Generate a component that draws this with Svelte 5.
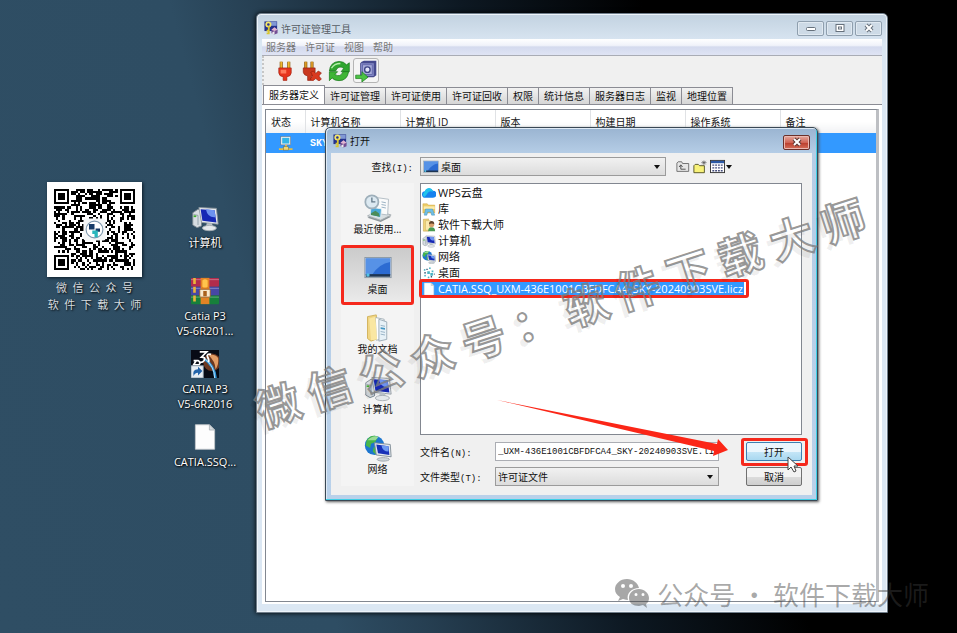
<script>
  const tabs = ['服务器定义', '许可证管理', '许可证使用', '许可证回收', '权限', '统计信息', '服务器日志', '监视', '地理位置'];
  const menus = ['服务器', '许可证', '视图', '帮助'];
  const columns = ['状态', '计算机名称', '计算机 ID', '版本', '构建日期', '操作系统', '备注'];

  const shortcuts = [
    { icon: 'computer', lines: ['计算机'] },
    { icon: 'archive', lines: ['Catia P3', 'V5-6R201...'] },
    { icon: 'catia', lines: ['CATIA P3', 'V5-6R2016'] },
    { icon: 'file', lines: ['CATIA.SSQ...'] }
  ];

  const places = [
    { icon: 'recent', label: '最近使用...' },
    { icon: 'desktop', label: '桌面' },
    { icon: 'documents', label: '我的文档' },
    { icon: 'computer', label: '计算机' },
    { icon: 'network', label: '网络' }
  ];

  const files = [
    { icon: 'cloud', name: 'WPS云盘' },
    { icon: 'library', name: '库' },
    { icon: 'user', name: '软件下载大师' },
    { icon: 'computer', name: '计算机' },
    { icon: 'network', name: '网络' },
    { icon: 'dots', name: '桌面' },
    { icon: 'file', name: 'CATIA.SSQ_UXM-436E1001CBFDFCA4_SKY-20240903SVE.licz' }
  ];

  let tab = tabs[0];
  let place = '桌面';
  let selected = files[6].name;
  let fileName = '_UXM-436E1001CBFDFCA4_SKY-20240903SVE.licz';

  // QR code, 37 x 37 modules
  const N = 37;

  function finder(x, y) {
    const d = Math.max(Math.abs(x - 3), Math.abs(y - 3));
    if (d > 4) return null;
    return d !== 4 && d !== 2;
  }

  function buildCode() {
    let path = '';
    let seed = 20240903;
    for (let y = 0; y < N; y++) {
      for (let x = 0; x < N; x++) {
        seed = (seed * 1103515245 + 12345) % 2147483648;
        let on = (seed >> 12) % 100 < 50;
        for (const f of [finder(x, y), finder(x - N + 7, y), finder(x, y - N + 7)]) {
          if (f !== null) on = f;
        }
        const a = Math.max(Math.abs(x - 30), Math.abs(y - 30));
        if (a <= 2) on = a !== 1;
        if (on) path += `M${x} ${y}h1v1h-1z`;
      }
    }
    return path;
  }

  const code = buildCode();
</script>

{#snippet icon(name, size)}
  <svg width={size} height={size} viewBox="0 0 32 32" aria-hidden="true">
    {#if name === 'computer'}
      <path d="M2 10l6-4 4 1v18l-5 2-5-3z" fill="#d7dde2" stroke="#79858e" />
      <path d="M3 12l5 1v11" fill="none" stroke="#8d9aa3" />
      <path d="M3 14h3" stroke="#3fae2a" stroke-width="2" />
      <path d="M9 4l20 1 2 18-19-2z" fill="#e6eaee" stroke="#8b959d" />
      <path d="M11 6l16 1 2 14-16-2z" fill="#1628b4" />
      <path d="M18 6l9 1 1 8q-9 1-11-9z" fill="#6d92f0" />
      <path d="M18 22h6l1 4h-8z" fill="#b9c1c7" />
      <ellipse cx="21" cy="27.500" rx="8" ry="3" fill="#e4e8eb" stroke="#a3abb1" />
    {:else if name === 'network'}
      <circle cx="12" cy="13" r="11" fill="#1c76cf" />
      <path d="M3 7q5-7 13-4l-3 6-5 2-1 5-5-3zM11 15l6 1 2 5-5 3-4-4z" fill="#47b649" />
      <path d="M4 7q6-6 13-4l-4 4z" fill="#bfeab8" opacity=".7" />
      <path d="M12 10l18 2 1 14-17-2z" fill="#e3e9ee" stroke="#7d8992" />
      <path d="M14 12l14 2 1 10-13-2z" fill="#1730b8" />
      <path d="M20 13l8 1v6q-7 0-8-7z" fill="#6f9bf2" />
      <ellipse cx="22" cy="29" rx="7" ry="2" fill="#cfd6db" stroke="#9ba4aa" />
    {:else if name === 'desktop'}
      <rect x="1" y="4" width="30" height="23" fill="#dbe3ea" stroke="#8694a1" />
      <rect x="2" y="5" width="28" height="19" fill="#2c6bd2" />
      <path d="M2 5h28v4Q17 11 9 24H2z" fill="#6aa2ee" opacity=".7" />
      <rect x="2" y="23" width="28" height="3" fill="#1e3552" />
      <circle cx="4.500" cy="24" r="2" fill="#54c2e7" />
    {:else if name === 'recent'}
      <path d="M4 27l11-6 16 5-12 6z" fill="#8d959a" />
      <path d="M4 25l11-6 16 5-12 6z" fill="#d9dfe2" stroke="#a3abb0" />
      <path d="M14 4l14 2-1 18-14-2z" fill="#fafbfb" stroke="#adb8c0" />
      <path d="M20 9l5 1M20 12l5 1M20 15l5 1" stroke="#8fa9bd" />
      <path d="M8 15l12 2-1 10-12-3z" fill="#49a8d8" stroke="#e6eef2" />
      <path d="M8 22l5-3 4 3 1 4-10-2z" fill="#4b8c5a" />
      <circle cx="9" cy="9" r="7.500" fill="#dce9f1" stroke="#9eafba" stroke-width="2" />
      <path d="M9 4v5h4" fill="none" stroke="#637989" stroke-width="1.500" />
    {:else if name === 'documents'}
      <path d="M4 3l10-2 2 27-8 3-4-3z" fill="#f0d583" stroke="#cfae53" />
      <path d="M13 4l10 2v22l-9 2z" fill="#fff" stroke="#9eabb4" />
      <path d="M17 6l9 3v20l-9 2z" fill="#e7f1f7" stroke="#97a8b3" />
      <path d="M19 13l5 1M19 20l5 1M19 23l5 1" stroke="#90adc1" />
      <path d="M19 15l5 1v2l-5-1z" fill="#4396c4" />
      <path d="M6 5l7-2 2 26-7 1z" fill="#fae7a2" />
    {:else if name === 'file'}
      <path d="M5 2h16l6 6v22H5z" fill="#fdfdfd" stroke="#c3c8cc" />
      <path d="M21 2v6h6z" fill="#d8dde0" stroke="#aeb5ba" />
    {:else if name === 'cloud'}
      <path d="M8 27a7 7 0 0 1-1-15 10 10 0 0 1 18-1 8 8 0 0 1 0 16z" fill="#1782ee" />
      <path d="M6 13a10 10 0 0 1 15-7q4 3 4 7-8-3-12 3-3 5-7 9-8-4 0-12z" fill="#20c3ec" />
    {:else if name === 'library'}
      <path d="M2 4h10l2 3h15v18H2z" fill="#edcd67" stroke="#c79f3c" />
      <path d="M4 10h25v6H4z" fill="#fcecac" />
      <path d="M5 30l3-14h16l5 14h-7l-2-7h-7l-2 7z" fill="#6fbfe6" stroke="#3f8ab3" />
    {:else if name === 'user'}
      <path d="M3 3l12-1v28H3z" fill="#efd37a" stroke="#b9963e" />
      <path d="M8 6h11v22H8z" fill="#faeab0" stroke="#c9aa57" />
      <path d="M14 30q0-9 8-9t8 9z" fill="#4a9b52" />
      <circle cx="22" cy="15" r="6" fill="#d8a06b" />
      <path d="M16 14q0-7 6-7t6 7q-6-3-12 0z" fill="#60432b" />
    {:else if name === 'dots'}
      <g fill="#4bb5c5">
        <path d="M12 12h6v6h-6zM19 16h6v6h-6zM22 10h4v4h-4z" />
        <circle cx="6" cy="9" r="2" /><circle cx="18" cy="5" r="2" /><circle cx="7" cy="22" r="2" /><circle cx="15" cy="26" r="2" />
      </g>
      <path d="M10 6h3v3h-3zM5 14h4v3H5zM20 23h3v3h-3zM27 17h2v3h-2z" fill="#365171" />
    {:else if name === 'archive'}
      <rect x="0" y="1" width="32" height="10" rx="1" fill="#b22c4c" />
      <rect x="0" y="11" width="32" height="10" rx="1" fill="#4747a5" />
      <rect x="0" y="21" width="32" height="10" rx="1" fill="#17803b" />
      <path d="M0 3h32M0 13h32M0 23h32" stroke="#fff" opacity=".35" />
      <path d="M4 1v30" stroke="#e9b43b" stroke-width="3" stroke-dasharray="7 3" />
      <rect x="11" y="1" width="10" height="30" fill="#e28325" />
      <rect x="10" y="14" width="12" height="9" rx="1" fill="#f7e8cc" stroke="#935922" />
      <rect x="14" y="16" width="4" height="6" fill="#a9601c" />
      <path d="M13 4q3-3 6 0v7q-3 2-6 0z" fill="#ffc44c" />
    {:else if name === 'catia'}
      <rect width="32" height="32" fill="#070b15" />
      <circle cx="24" cy="14" r="10" fill="#6d3820" />
      <path d="M20 6q7-2 11 3 1 8-3 13 0-9-8-16z" fill="#e19c65" />
      <path d="M15 10q12 8 13 22" fill="none" stroke="#2c93d8" stroke-width="3" />
      <path d="M16 10q11 9 11 22" fill="none" stroke="#c6e6f8" />
      <path d="M10 2h8l-6 6q5 0 3 4-2 3-6 2M3 12h5q4 2 1 5H3l3-5M23 5q-6-1-4 3t1 6" fill="none" stroke="#fff" stroke-width="2" />
      <rect x="0" y="18" width="14" height="14" fill="#e8eef4" stroke="#8797a6" />
      <path d="M3 30q-2-8 5-8v-3l5 5-5 5v-3q-4 0-5 4z" fill="#2364aa" />
    {:else if name === 'app'}
      <path d="M1 1h29v22H1z" fill="#24318c" />
      <path d="M15 2h14v9H15z" fill="#8098d4" />
      <circle cx="10" cy="8" r="5" fill="none" stroke="#f4e66a" stroke-width="4" />
      <path d="M11 12v18M11 22H6M11 28H6" stroke="#d9c630" stroke-width="4" />
      <path d="M17 20l7-6 7 6v8l-7 3-7-3z" fill="#744f93" />
      <path d="M17 20l7 3 7-3-7-6z" fill="#e1b5d1" />
      <path d="M24 23v8l-7-3z" fill="#eee" />
    {:else if name === 'plug'}
      <path d="M10 1v11M22 1v11" stroke="#8a5a10" stroke-width="5" />
      <path d="M10 1v11M22 1v11" stroke="#f0b62c" stroke-width="3" />
      <path d="M6 11h20v8q-1 6-7 6v6h-6v-6q-6 0-7-6z" fill="#e7341d" stroke="#9d1e0e" />
      <path d="M9 14h9v6h-9z" fill="#ff7a5c" />
    {:else if name === 'unplug'}
      <path d="M6 1v11M16 1v11" stroke="#8a5a10" stroke-width="5" />
      <path d="M6 1v11M16 1v11" stroke="#d99a24" stroke-width="3" />
      <path d="M2 11h19v8q-1 5-6 5v7h-6v-7q-6-1-7-6z" fill="#c9381f" stroke="#8f1d0d" />
      <path d="M14 18l4-2 4 4 4-4 5 3-4 5 4 5-4 3-5-4-5 4-4-3 4-5z" fill="#d93a20" stroke="#8f1d0d" />
    {:else if name === 'refresh'}
      <path d="M2 16Q3 3 16 2q7 0 11 5l4-3v13H19l4-5q-8-5-12 4z" fill="#2fa52f" stroke="#137316" />
      <path d="M30 17q-2 13-14 13-7 0-10-4l-4 4V17h12l-4 4q8 5 12-4z" fill="#3fb536" stroke="#137316" />
      <path d="M5 12Q9 5 18 5" fill="none" stroke="#b4edaa" stroke-width="2" />
    {:else if name === 'vault'}
      <path d="M9 3l4-2h18v21l-4 3H9z" fill="#454990" />
      <rect x="8" y="4" width="20" height="20" rx="1" fill="#8186c6" stroke="#3c407e" />
      <rect x="11" y="7" width="14" height="14" fill="#a6abd9" stroke="#585da1" />
      <circle cx="18" cy="14" r="4" fill="#e3e5fa" stroke="#3d4384" stroke-width="2" />
      <path d="M1 22h9v-5l9 8-9 7v-5H1z" fill="#4cc344" stroke="#187b1a" />
    {:else if name === 'server'}
      <rect x="6" y="1" width="21" height="18" fill="#e9edf0" stroke="#56636e" />
      <rect x="9" y="4" width="15" height="12" fill="#33b5e8" />
      <path d="M17 19v8M2 28h29" stroke="#e4be46" stroke-width="4" />
      <rect x="12" y="23" width="10" height="7" fill="#f0d779" stroke="#806a28" />
    {:else if name === 'up'}
      <path d="M2 26V7l3-3h8l2 4h14v18z" fill="#e6e6e6" stroke="#666" stroke-width="2" />
      <path d="M11 12v9h11M7 16l4-5 4 5" fill="none" stroke="#444" stroke-width="2" />
    {:else if name === 'newfolder'}
      <path d="M2 29V13l3-3h7l3 3h11v16z" fill="#f8f27a" stroke="#4c4a1c" stroke-width="2" />
      <path d="M25 1v11M19 6h12M21 2l8 8M29 2l-8 8" stroke="#555" stroke-width="1.500" />
    {:else if name === 'views'}
      <rect x="1" y="3" width="30" height="26" fill="#fff" stroke="#333" stroke-width="2" />
      <rect x="2" y="4" width="28" height="5" fill="#2c59a6" />
      <path d="M5 13h22M5 19h22M5 25h22" stroke="#444c7c" stroke-width="3" stroke-dasharray="4 2" />
    {/if}
  </svg>
{/snippet}

<main class="desktop">
  <figure class="qr">
    <svg viewBox="-3 -3 43 43" role="img" aria-label="微信公众号">
      <rect x="-3" y="-3" width="43" height="43" fill="#fff" />
      <path d={code} fill="#000" shape-rendering="crispEdges" />
      <rect x="13.500" y="13.500" width="10" height="10" rx="1" fill="#f4f6f7" />
      <circle cx="18.500" cy="18.500" r="3.800" fill="#fff" stroke="#7e98ae" stroke-width=".5" />
      <path d="M16 16h2.500v2.500H16zM19 18h2v1.500h-2z" fill="#173b68" />
      <path d="M17.500 19h2.500v3h-1.500v-1.500h-1z" fill="#29b7bd" />
    </svg>
    <figcaption>微&ensp;信&ensp;公&ensp;众&ensp;号<br />软&ensp;件&ensp;下&ensp;载&ensp;大&ensp;师</figcaption>
  </figure>

  <nav class="shortcuts">
    {#each shortcuts as item}
      <button class="shortcut">
        {@render icon(item.icon, 28)}
        {#each item.lines as line}
          <span>{line}</span>
        {/each}
      </button>
    {/each}
  </nav>

  <section class="window">
    <header class="titlebar">
      {@render icon('app', 14)}
      <h1>许可证管理工具</h1>
      <div class="controls">
        <button aria-label="最小化"><svg width="12" height="10" viewBox="0 0 12 10"><rect x="1.500" y="4.500" width="9" height="3" rx="1" fill="#fff" stroke="#66717c" /></svg></button>
        <button aria-label="最大化"><svg width="12" height="10" viewBox="0 0 12 10"><rect x="2" y="1.500" width="8" height="7" fill="#fff" stroke="#66717c" /><rect x="4.500" y="4" width="3" height="2" fill="#fff" stroke="#66717c" /></svg></button>
        <button aria-label="关闭"><svg width="12" height="10" viewBox="0 0 12 10"><path d="M3 2l6 6M9 2l-6 6" stroke="#66717c" stroke-width="4" /><path d="M3 2l6 6M9 2l-6 6" stroke="#fff" stroke-width="2" /></svg></button>
      </div>
    </header>

    <div class="menubar">
      {#each menus as menu}
        <button>{menu}</button>
      {/each}
    </div>

    <div class="toolbar">
      <button aria-label="连接">{@render icon('plug', 20)}</button>
      <button aria-label="断开">{@render icon('unplug', 20)}</button>
      <button aria-label="刷新">{@render icon('refresh', 22)}</button>
      <button aria-label="导入许可证" class="framed">{@render icon('vault', 22)}</button>
    </div>

    <div class="tabs" role="tablist">
      {#each tabs as name}
        <button role="tab" aria-selected={tab === name} class:active={tab === name} on:click={() => (tab = name)}>{name}</button>
      {/each}
    </div>

    <div class="panel">
      <div class="sheet">
        <table>
          <thead>
            <tr>
              {#each columns as column}
                <th>{column}</th>
              {/each}
            </tr>
          </thead>
          <tbody>
            <tr>
              <td class="status">{@render icon('server', 15)}</td>
              <td>SKY</td>
              <td></td>
              <td></td>
              <td></td>
              <td></td>
              <td></td>
            </tr>
          </tbody>
        </table>
      </div>
    </div>
  </section>

  <section class="dialog" role="dialog" aria-labelledby="dialog-title">
    <header class="titlebar">
      {@render icon('app', 14)}
      <h2 id="dialog-title">打开</h2>
      <button class="close" aria-label="关闭"><svg width="12" height="10" viewBox="0 0 12 10"><path d="M3 2l6 6M9 2l-6 6" stroke="#5a3531" stroke-width="4" /><path d="M3 2l6 6M9 2l-6 6" stroke="#fff" stroke-width="2" /></svg></button>
    </header>

    <div class="body">
      <div class="lookup">
        <label for="look-in">查找<span class="key">(I):</span></label>
        <div class="combo look">
          {@render icon('desktop', 16)}
          <select id="look-in"><option>桌面</option></select>
        </div>
        <button aria-label="向上一级">{@render icon('up', 14)}</button>
        <button aria-label="新建文件夹">{@render icon('newfolder', 14)}</button>
        <button aria-label="查看" class="views">{@render icon('views', 15)}</button>
      </div>

      <div class="content">
        <nav class="places">
          {#each places as item}
            <button class:current={place === item.label} on:click={() => (place = item.label)}>
              {@render icon(item.icon, 28)}
              <span>{item.label}</span>
            </button>
          {/each}
        </nav>

        <div class="browse">
          <ul class="files">
            {#each files as file}
              <li>
                <button class:selected={selected === file.name} on:click={() => (selected = file.name)}>
                  {@render icon(file.icon, 14)}
                  <span>{file.name}</span>
                </button>
              </li>
            {/each}
          </ul>

          <form class="fields" on:submit|preventDefault>
            <label for="file-name">文件名<span class="key">(N):</span></label>
            <input id="file-name" type="text" bind:value={fileName} />
            <button class="push primary">打开</button>
            <label for="file-type">文件类型<span class="key">(T):</span></label>
            <div class="combo">
              <select id="file-type"><option>许可证文件</option></select>
            </div>
            <button class="push" type="button">取消</button>
          </form>
        </div>
      </div>
    </div>

    <svg class="arrow" width="234" height="66" viewBox="0 0 234 66" aria-hidden="true">
      <path d="M1 3L221 47l1-5 10 11-15 6 1-5Z" fill="#fb2617" />
    </svg>
    <svg class="cursor" width="13" height="18" viewBox="0 0 13 18" aria-hidden="true">
      <path d="M1 1v13l3-3 3 5 2-1-2-5h4z" fill="#fff" stroke="#444" />
    </svg>
  </section>

  <div class="stamp">微 信 公 众 号 ： 软 件 下 载 大 师</div>

  <div class="credit">
    <svg width="36" height="32" viewBox="0 0 36 32" aria-hidden="true">
      <path fill-rule="evenodd" d="M13 1C6 1 1 6 1 11c0 4 2 6 5 8l-2 4 5-2q3 1 5 1c-2-7 4-12 11-12C24 5 19 1 13 1zM9 6a2 2 0 1 1 0 4 2 2 0 0 1 0-4zm8 0a2 2 0 1 1 0 4 2 2 0 0 1 0-4z" />
      <path fill-rule="evenodd" d="M25 11c-6 0-10 4-10 9s4 8 10 8l4-1 4 3-1-4c2-1 3-4 3-6 0-5-5-9-10-9zM22 15a1.500 1.500 0 1 1 0 3 1.500 1.500 0 0 1 0-3zm7 0a1.500 1.500 0 1 1 0 3 1.500 1.500 0 0 1 0-3z" />
    </svg>
    <span>公众号 · 软件下载大师</span>
  </div>
</main>

<style>
  :global(body) {
    margin: 0;
    background: #000;
  }
  .desktop {
    position: relative;
    display: flex;
    align-items: flex-start;
    box-sizing: border-box;
    height: 100vh;
    padding: 182px 0 0 47px;
    overflow: hidden;
    background: linear-gradient(75deg, #2f4e64 0, #2e4d63 30%, #263f52 38%, #0d1822 56%, #000 72%);
    font-family: 'Open Sans', 'Noto Sans CJK SC', sans-serif;
    font-size: 10px;
    color: #111;
  }
  svg { display: block; flex: none; }
  button, input, select { font: inherit; color: inherit; }
  button { padding: 0; border: 0; background: none; }

  /* desktop */
  .qr { width: 95px; margin: 0; text-align: center; }
  .qr svg { width: 95px; height: 95px; box-shadow: 1px 1px 3px #0b1a26; }
  .qr figcaption {
    margin-top: 2px;
    font-family: 'Noto Sans CJK SC', sans-serif;
    font-size: 11px;
    line-height: 17px;
    color: #d4dade;
    white-space: nowrap;
    text-shadow: 1px 1px 2px #000;
  }
  .shortcuts { display: flex; flex-direction: column; width: 80px; margin: 22px 0 0 23px; }
  .shortcut {
    display: flex;
    flex-direction: column;
    align-items: center;
    height: 73px;
    font-size: 11px;
    line-height: 15px;
    color: #fff;
    white-space: nowrap;
    text-shadow: 1px 1px 2px #000, 0 0 2px #000;
  }
  .shortcut svg { margin-bottom: 3px; }

  /* license manager */
  .window {
    position: absolute;
    inset: 13px 69px 20px 256px;
    display: flex;
    flex-direction: column;
    box-sizing: border-box;
    padding: 0 5px 8px;
    border: 1px solid #6f7d8a;
    border-radius: 5px 5px 0 0;
    background: linear-gradient(#c2d2e0, #dbe7f3 30px);
    box-shadow: inset 0 0 0 1px #eef4fa, 0 0 5px #000;
  }
  .titlebar { display: flex; align-items: center; gap: 3px; height: 25px; }
  h1, h2 { margin: 0; font-size: 10px; font-weight: 400; }
  h1 { color: #555c64; }
  .window > .titlebar { padding: 3px 0 0 2px; height: 22px; }
  .controls { display: flex; gap: 2px; margin: 0 0 0 auto; }
  .controls button {
    display: flex;
    align-items: center;
    justify-content: center;
    width: 27px;
    height: 15px;
    border: 1px solid #8f9fae;
    border-radius: 2px;
    background: #cddae6;
    box-shadow: inset 0 0 0 1px #e0e9f1;
  }
  .menubar {
    display: flex;
    gap: 9px;
    height: 16px;
    padding-left: 4px;
    border-bottom: 1px solid #a9acb5;
    background: linear-gradient(#fff, #f0f2fa 40%, #d4daee 50%, #dfe4f4);
    line-height: 14px;
    color: #777;
  }
  .toolbar {
    display: flex;
    align-items: center;
    gap: 1px;
    height: 29px;
    padding-left: 8px;
    border-left: 2px dotted #c6c6c6;
    background: #f0f0f0;
  }
  .toolbar button {
    display: flex;
    align-items: center;
    justify-content: center;
    width: 26px;
    height: 25px;
    box-sizing: border-box;
    border: 1px solid transparent;
    border-radius: 3px;
  }
  .toolbar .framed { border-color: #b5b5b5; background: #f5f5f5; }
  .tabs { display: flex; align-items: flex-end; height: 19px; padding-left: 1px; background: #f0f0f0; }
  .tabs button {
    height: 17px;
    padding: 0 5px;
    border: 1px solid #8b8c94;
    border-width: 1px 1px 0 0;
    background: linear-gradient(#f2f2f2, #d6d6d6);
    line-height: 16px;
  }
  .tabs .active { height: 19px; border-left-width: 1px; background: #fff; }
  .panel {
    flex: 1;
    display: flex;
    padding: 4px 3px 2px;
    border-top: 1px solid #8b8c94;
    background: #fff;
  }
  .sheet {
    flex: 1;
    border: 1px solid #828790;
    border-right: 3px solid #bdbfc3;
    background: #fff;
  }
  table { width: 100%; border-collapse: collapse; table-layout: fixed; }
  th {
    height: 23px;
    padding: 0 0 0 5px;
    box-sizing: border-box;
    border-right: 1px solid #e0e2e5;
    background: linear-gradient(#fff 50%, #f1f2f4);
    font-weight: 400;
    text-align: left;
  }
  th:not(:first-child) { width: 95px; }
  th:first-child { width: 39px; }
  th:last-child { width: auto; border-right: 0; }
  td {
    height: 20px;
    padding: 0 0 0 5px;
    background: #3399ff;
    color: #fff;
    font-family: 'Liberation Mono', monospace;
    font-weight: 700;
  }
  .status svg { margin-left: 7px; }

  /* open dialog */
  .dialog {
    position: absolute;
    top: 127px;
    left: 325px;
    width: 493px;
    box-sizing: border-box;
    padding: 0 5px 5px;
    border: 1px solid #3a4854;
    border-radius: 5px 5px 0 0;
    background: linear-gradient(#9ab4d1, #b5cde6 25px, #b9d1ea);
    box-shadow: inset -1px -1px 0 #3fcfe6, inset 1px 1px 0 #dfeaf5, 1px 1px 3px #555;
  }
  .dialog .titlebar { height: 25px; padding-left: 2px; }
  .close {
    display: flex;
    align-items: center;
    justify-content: center;
    width: 27px;
    height: 15px;
    margin: 3px 2px 0 auto;
    border: 1px solid #6b302a;
    border-radius: 2px;
    background: linear-gradient(#e6a99f, #cf6455 50%, #b93b2a 51%, #d4705c);
    box-shadow: inset 0 0 0 1px #eab9b1;
  }
  .body { padding: 4px 10px 9px; background: #f0f0f0; }
  .lookup { display: flex; align-items: center; margin-bottom: 7px; }
  .lookup label { width: 72px; margin-right: 7px; text-align: right; }
  .lookup button { margin-left: 3px; }
  .lookup .look + button { margin-left: 10px; }
  .key { font-family: 'Liberation Mono', monospace; font-size: 9px; }
  .views { display: flex; align-items: center; gap: 1px; }
  .views::after, .combo::after {
    content: '';
    border: 3px solid transparent;
    border-top: 4px solid #111;
    border-bottom: 0;
  }
  .combo {
    display: flex;
    align-items: center;
    box-sizing: border-box;
    height: 19px;
    padding: 0 5px 0 2px;
    border: 1px solid #9b9b9b;
    background: linear-gradient(#f1f1f1, #dcdcdc);
  }
  .combo select {
    flex: 1;
    appearance: none;
    padding: 0;
    border: 0;
    background: none;
  }
  .look { width: 246px; gap: 2px; }
  .content { display: flex; gap: 6px; }
  .places { width: 73px; padding-top: 2px; background: #f4f4f4; }
  .places button {
    position: relative;
    display: flex;
    flex-direction: column;
    align-items: center;
    width: 100%;
    height: 60px;
    padding-top: 9px;
    box-sizing: border-box;
    line-height: 14px;
    white-space: nowrap;
  }
  .places .current { background: linear-gradient(#c9c9c9, #ececec); }
  .places .current::after, .files .selected::after, .primary::after {
    content: '';
    position: absolute;
    inset: 0;
    border: 3px solid #f5281c;
    border-radius: 3px;
  }
  .browse { flex: 1; min-width: 0; }
  .files {
    box-sizing: border-box;
    height: 252px;
    margin: 0;
    padding: 1px;
    border: 1px solid #828790;
    background: #fff;
    list-style: none;
    font-size: 11px;
  }
  .files button {
    position: relative;
    display: flex;
    align-items: center;
    gap: 1px;
    height: 16px;
    line-height: 16px;
    white-space: nowrap;
  }
  .files span { padding: 0 1px; }
  .files .selected { background: #3399ff; color: #fff; }
  .files .selected::after { inset: -2px -5px -1px -3px; }
  .fields {
    display: grid;
    grid-template-columns: 75px 1fr 56px;
    align-items: center;
    row-gap: 6px;
    padding: 7px 0 0;
  }
  .fields input {
    box-sizing: border-box;
    min-width: 0;
    height: 19px;
    padding: 0 2px;
    border: 1px solid #abadb3;
    background: #fff;
    font-family: 'Liberation Mono', monospace;
    font-size: 9px;
  }
  .fields input, .fields .combo { margin-right: 27px; }
  .push {
    position: relative;
    height: 19px;
    border: 1px solid #707070;
    border-radius: 2px;
    background: linear-gradient(#f3f3f3 50%, #dcdcdc 51%, #cfcfcf);
  }
  .primary { border-color: #3c7fb1; background: linear-gradient(#eaf6fd 50%, #c5e6f7 51%, #a9d8f0); }
  .primary::after { inset: -5px -7px -6px -6px; }

  .arrow { position: absolute; top: 269px; left: 170px; }
  .cursor { position: absolute; top: 328px; left: 461px; }

  /* watermarks */
  .stamp {
    position: absolute;
    top: 281px;
    left: 241px;
    transform: rotate(-18deg);
    font-family: 'Noto Sans CJK SC', sans-serif;
    font-size: 44px;
    font-weight: 700;
    line-height: 60px;
    color: transparent;
    white-space: nowrap;
    -webkit-text-stroke: 2px rgba(125, 125, 125, .8);
    text-shadow: -6px 4px 0 rgba(0, 0, 0, .06);
    pointer-events: none;
  }
  .credit {
    position: absolute;
    right: 28px;
    bottom: 19px;
    display: flex;
    align-items: center;
    gap: 7px;
    font-family: 'Noto Sans CJK SC', sans-serif;
    font-size: 26px;
    line-height: 40px;
    color: rgba(60, 60, 60, .45);
    fill: rgba(60, 60, 60, .45);
    white-space: nowrap;
    pointer-events: none;
  }
</style>
